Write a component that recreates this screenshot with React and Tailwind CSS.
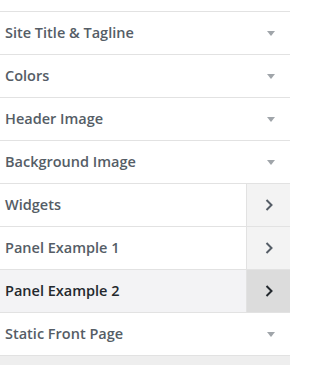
const sections = [
  { title: "Site Title & Tagline" },
  { title: "Colors" },
  { title: "Header Image" },
  { title: "Background Image" },
  { title: "Widgets", panel: true },
  { title: "Panel Example 1", panel: true },
  { title: "Panel Example 2", panel: true, active: true },
  { title: "Static Front Page" },
];

function Triangle() {
  return (
    <svg width="8" height="5" viewBox="0 0 8 5" className="mr-[15px] mt-[1px]">
      <path d="M0 0h8L4 5z" fill="#a0a5aa" />
    </svg>
  );
}

function Chevron({ dark }) {
  return (
    <svg width="8" height="12" viewBox="0 0 8 12">
      <path
        d="M1.5 1l5 5-5 5"
        fill="none"
        stroke={dark ? "#23282d" : "#555d66"}
        strokeWidth="2"
      />
    </svg>
  );
}

export default function App() {
  return (
    <div
      className="w-[290px] h-[365px] bg-[#eeeeee] overflow-hidden"
      style={{ fontFamily: '"Open Sans", sans-serif' }}
    >
      <div className="h-[11px] bg-white" />
      <ul className="border-t border-[#e2e2e2]">
        {sections.map((s) => (
          <li
            key={s.title}
            className={
              "flex h-[43px] items-stretch border-b border-[#e2e2e2] " +
              (s.active ? "bg-[#f3f3f5]" : "bg-white")
            }
          >
            <span
              className={
                "flex flex-1 items-center pl-[5px] text-[14.5px] font-semibold " +
                (s.active ? "text-[#23282d]" : "text-[#555d66]")
              }
            >
              {s.title}
            </span>
            {s.panel ? (
              <span
                className={
                  "flex w-[44px] items-center justify-center border-l border-[#e2e2e2] " +
                  (s.active ? "bg-[#dcdcdc]" : "bg-[#f3f3f3]")
                }
              >
                <Chevron dark={s.active} />
              </span>
            ) : (
              <span className="flex items-center">
                <Triangle />
              </span>
            )}
          </li>
        ))}
      </ul>
    </div>
  );
}
